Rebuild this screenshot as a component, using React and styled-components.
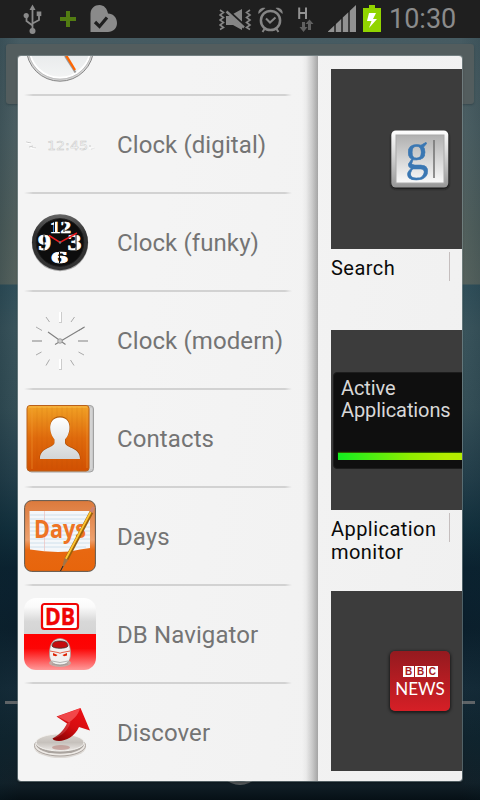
import React from "react";
import styled, { createGlobalStyle } from "styled-components";

const GlobalStyle = createGlobalStyle`
  * { box-sizing: border-box; }
  body { margin: 0; background: #0a1a24; font-family: Roboto, "Liberation Sans", sans-serif; }
  svg { display: block; flex: none; }
`;

const Screen = styled.div`
  width: 480px;
  height: 800px;
  overflow: hidden;
  display: flex;
  flex-direction: column;
`;

const StatusBar = styled.header`
  height: 38px;
  flex: none;
  display: flex;
  justify-content: space-between;
  background: #1f1f1f;
`;

const Time = styled.time`
  width: 91px;
  color: #8b8b8b;
  font-size: 27px;
  line-height: 38px;
  letter-spacing: 0;
`;

const StatusGroup = styled.div`
  display: flex;
`;

const Wallpaper = styled.main`
  position: relative;
  flex: 1;
  padding: 18px 18px 19px;
  background:
    linear-gradient(90deg, rgba(10, 35, 45, 0.22), transparent 4%, transparent 96%, rgba(10, 35, 45, 0.15)),
    linear-gradient(#465b62, #4d6064 90px, #53615e 190px, #58645f 246px, #31505b 247px,
      #3b555d 290px, #365058 370px, #243f4b 440px, #12303d 490px, #0b2230 530px,
      #0b1f2c 590px, #152b38 650px, #10242e 700px, #122028 745px, #061016 762px);
`;

const SearchBackdrop = styled.div`
  position: absolute;
  left: 6px;
  right: 6px;
  top: 6px;
  height: 60px;
  border-radius: 3px;
  background: #535d5e;
  box-shadow: 0 1px 2px rgba(20, 35, 40, 0.35);
`;

const PageLine = styled.div`
  position: absolute;
  left: 5px;
  right: 5px;
  top: 663px;
  height: 3px;
  background: #5f6467;
`;

const HomeRing = styled.div`
  position: absolute;
  left: 218px;
  top: 703px;
  width: 44px;
  height: 44px;
  border-radius: 50%;
  border: 3px solid #5a5f61;
`;

const Dialog = styled.section`
  position: relative;
  height: 725px;
  display: flex;
  overflow: hidden;
  border-radius: 3px;
  background: linear-gradient(100deg, #f4f4f4 30%, #f0f0f0);
  box-shadow: 0 0 0 1px rgba(150, 165, 168, 0.5), 0 2px 3px rgba(0, 0, 0, 0.35);
`;

const ListPane = styled.div`
  width: 300px;
  flex: none;
  padding-left: 6px;
  display: flex;
  background: linear-gradient(90deg, transparent 284px, rgba(0, 0, 0, 0.03) 288px,
    rgba(0, 0, 0, 0.16) 294px, rgba(0, 0, 0, 0.32) 300px);
`;

const List = styled.ul`
  width: 270px;
  margin: -58px 0 0;
  padding: 0;
  list-style: none;
`;

const Row = styled.li`
  height: 98px;
  padding-bottom: 2px;
  display: flex;
  align-items: center;
  gap: 21px;
  background: ${(p) =>
    p.$last
      ? "none"
      : "linear-gradient(90deg, transparent, #d2d2d2 9px, #d2d2d2 261px, transparent 268px) bottom / 100% 2px no-repeat"};
`;

const RowLabel = styled.span`
  padding-top: 2px;
  color: #747474;
  font-size: 24px;
  line-height: 30px;
  letter-spacing: 0.1px;
  white-space: nowrap;
`;

const PreviewPane = styled.div`
  flex: 1;
  min-width: 0;
  padding: 13px 0 0 13px;
  overflow: hidden;
`;

const Preview = styled.figure`
  height: 261px;
  margin: 0;
`;

const PreviewTile = styled.div`
  height: 180px;
  display: flex;
  align-items: center;
  padding-left: ${(p) => p.$inset}px;
  background: #3c3c3c;
`;

const Caption = styled.figcaption`
  display: flex;
  justify-content: space-between;
  padding-right: 12px;
  color: #0a0a0a;
  font-size: 20px;
  line-height: 23px;
  letter-spacing: 0.45px;
`;

const CaptionText = styled.span`
  width: 114px;
  padding-top: 8px;
`;

const CaptionRule = styled.i`
  width: 1px;
  height: 29px;
  margin-top: 3px;
  background: #c5bebe;
`;

const Monitor = styled.div`
  flex: none;
  width: 150px;
  height: 97px;
  padding: 4px 0 0 7px;
  border: 1px solid #1d1d1d;
  border-radius: 4px;
  background: #0f0f0f;
  color: #d8d8d8;
  font-size: 20px;
  line-height: 22px;
  letter-spacing: -0.1px;
`;

const MonitorBar = styled.div`
  height: 7px;
  margin: 32px 0 0 -3px;
  background: linear-gradient(90deg, #12ee20, #8fee00 50%, #b4ee00 75%);
  box-shadow: 0 -1px 1px #2c5a00;
`;

const BbcTile = styled.div`
  width: 60px;
  height: 60px;
  border-radius: 5px;
  background: linear-gradient(#941a1f, #d61f26);
  box-shadow: 0 1px 3px 1px rgba(0, 0, 0, 0.55);
`;

const LeftStatusIcons = () => (
  <svg width="125" height="38" viewBox="0 0 125 38">
    <g fill="none" stroke="#8a8a8a" strokeWidth="1.8">
      <path d="M32.5 8v23M32.5 25.5l-6-4.500v-5M32.500 23.500l6.500-3.500v-6" />
    </g>
    <g fill="#8a8a8a">
      <path d="M32.500 4.500l3 5.500h-6z" />
      <circle cx="26.200" cy="15.500" r="2.600" />
      <rect x="36.700" y="11.500" width="4.600" height="4.600" />
      <circle cx="32.500" cy="31" r="3" />
      <path d="M90.500 13.500C91 8 94.500 5 99.500 5c4.500 0 7.500 3.500 8.500 8.500 5 0 9 4 9 9.500s-4 9-9 9H90.500z" />
    </g>
    <path d="M68 11v16M60 19h16" stroke="#527c12" strokeWidth="4" />
    <path d="M95 22l4.500 4.500L107 17.500" fill="none" stroke="#1f1f1f" strokeWidth="3.200" />
  </svg>
);

const RightStatusIcons = () => (
  <svg width="170" height="38" viewBox="219 0 170 38">
    <g fill="none" stroke="#858585" strokeWidth="1.600">
      <path d="M220 10l3.500 2.500-3.500 2.500 3.500 2.500-3.500 2.500 3.500 2.500-3.500 2.500 3.500 2.500-3.500 2M250 10l-3.500 2.500 3.500 2.500-3.500 2.500 3.500 2.500-3.500 2.500 3.500 2.500-3.500 2.500 3.500 2" />
    </g>
    <path d="M226 16h5l11 10v4l-9-5h-7zM233 14l9-5v13z" fill="#858585" />
    <path d="M227 10l17 16" stroke="#1f1f1f" strokeWidth="3.500" />
    <path d="M226.500 11.500l17.500 16" stroke="#858585" strokeWidth="2.400" />
    <circle cx="270.500" cy="20.500" r="9.600" fill="none" stroke="#858585" strokeWidth="2.500" />
    <path d="M266 18.500l4 4 5.500-5M264.500 29l-2 3M276.500 29l2 3" fill="none" stroke="#858585" strokeWidth="2" />
    <path d="M258.500 14c-1-4 3-7 7-6zM282.500 14c1-4-3-7-7-6z" fill="#858585" />
    <path d="M299.200 7.500v11.500M306 7.500v11.500M299.200 13h6.800" stroke="#929292" strokeWidth="2" />
    <path d="M302 22h3v5h2.500l-4 5-4-5h2.500zM308 30v-6h-2.500l4-4.500 4 4.500H311v6z" fill="#606060" />
    <path d="M328 32V31.500L356 5v27z" fill="#919191" />
    <path d="M335 24v8M342 17.500V32M349 11v21" stroke="#101010" strokeWidth="1.300" />
    <path d="M363 8h6V5h6v3h6v24h-18z" fill="#91d400" />
    <path d="M369 13h7l-3 6h4l-8 9 2.500-7H367z" fill="#fff" />
  </svg>
);

const AnalogIcon = () => (
  <svg width="72" height="72" viewBox="0 0 72 72">
    <defs>
      <linearGradient id="face" x2="0" y2="1">
        <stop stopColor="#d8dcdf" /><stop offset="1" stopColor="#f3f4f4" />
      </linearGradient>
    </defs>
    <circle cx="36" cy="37.500" r="33.700" fill="#d6d6d6" stroke="#858585" strokeWidth="1" />
    <circle cx="36" cy="37" r="30.700" fill="url(#face)" stroke="#fff" strokeWidth="2" />
    <circle cx="36" cy="37.200" r="32" fill="none" stroke="#aaa" strokeWidth=".6" />
    <path d="M41 46l10.500 16.500" stroke="#999" strokeWidth="2" />
    <path d="M41 43.500L51 60" stroke="#ff6500" strokeWidth="2.300" />
  </svg>
);

const DigitalIcon = () => (
  <svg width="72" height="72" viewBox="0 0 72 72">
    <text x="23" y="41.500" textLength="41" lengthAdjust="spacingAndGlyphs" fontFamily="DejaVu Sans" fontSize="13" fill="#fbfbfb" stroke="#c6c6c6" strokeWidth=".45">12:45</text>
    <path d="M2 34l5 1M5 39l4-1M8 40h4M65 38h2M67 41l4-1" stroke="#ccc" fill="none" />
    <path d="M2 35l5 1M6 40l6 1M65 40h6" stroke="#fff" fill="none" />
  </svg>
);

const FunkyIcon = () => (
  <svg width="72" height="72" viewBox="0 0 72 72">
    <defs>
      <linearGradient id="rim" x2="0" y2="1">
        <stop stopColor="#666" /><stop offset=".35" stopColor="#303030" /><stop offset="1" stopColor="#333" />
      </linearGradient>
    </defs>
    <circle cx="36" cy="37" r="28.200" fill="#aaa" />
    <circle cx="36" cy="36.200" r="28" fill="url(#rim)" />
    <circle cx="36" cy="36.500" r="23.800" fill="#0d0d0d" stroke="#1b1b1b" />
    <g fill="#fff" stroke="#fff" strokeWidth=".7" fontFamily="Liberation Serif" fontWeight="bold">
      <text x="26" y="26.500" fontSize="17" textLength="21" lengthAdjust="spacingAndGlyphs">12</text>
      <text x="14" y="44" fontSize="24" textLength="13" lengthAdjust="spacingAndGlyphs">9</text>
      <text x="43.500" y="44" fontSize="24" textLength="14" lengthAdjust="spacingAndGlyphs">3</text>
      <text x="27" y="57" fontSize="17" textLength="17" lengthAdjust="spacingAndGlyphs">6</text>
    </g>
    <path d="M30.500 15v11M40 15v11M20 29v15M52 29v15M35.500 46v11" stroke="#0d0d0d" strokeWidth="1" />
    <path d="M25 29.500l11 7 17-9.500" fill="none" stroke="#e8191c" strokeWidth="1.500" />
    <circle cx="36" cy="36.500" r="1.200" fill="#777" />
  </svg>
);

const ModernIcon = () => (
  <svg width="72" height="72" viewBox="0 0 72 72">
    <g stroke="#aaa" strokeWidth="1">
      <path d="M22 13l3.500 5M50.500 13L47 18M12 23l6 3.500M60.500 23L55 26.500M12 51l5.500-3M60 51l-5.500-3M22 61.500l3.500-6M50 61.500L46.500 56" />
    </g>
    <path d="M8 37h10M54 37h10" stroke="#bbb" strokeWidth="2" />
    <path d="M36.500 8v11M36.500 55v11" stroke="#ccc" strokeWidth="3" />
    <path d="M36 8v10M36 55v10" stroke="#fff" strokeWidth="2" />
    <path d="M24 28l17.500 12.500M31 40.500L60.500 23" stroke="#808080" strokeWidth="1.100" />
    <circle cx="36" cy="37" r="2.300" fill="#ccc" stroke="#888" strokeWidth=".7" />
  </svg>
);

const ContactsIcon = () => (
  <svg width="72" height="72" viewBox="0 0 72 72">
    <defs>
      <linearGradient id="book" x2="0" y2="1">
        <stop stopColor="#f1a225" /><stop offset=".5" stopColor="#df6a0c" /><stop offset="1" stopColor="#d15002" />
      </linearGradient>
      <linearGradient id="person" x2="0" y2="1">
        <stop stopColor="#fff" /><stop offset="1" stopColor="#d2d5d7" />
      </linearGradient>
    </defs>
    <rect x="4" y="3.500" width="65.500" height="66.500" rx="3.500" fill="#c9c9c9" stroke="#a1a1a1" />
    <path d="M67 6v61" stroke="#dedede" />
    <rect x="3" y="3.500" width="62" height="65.500" rx="3" fill="url(#book)" stroke="#ba6019" />
    <path d="M4.500 5h59" stroke="#f8bc4c" />
    <path d="M8 5v62M63 6v60" stroke="#f3a038" strokeWidth=".8" opacity=".6" />
    <path d="M13 5v62M18 5v62M23 5v62M28 5v62M33 5v62M38 5v62M43 5v62M48 5v62M53 5v62M58 5v62" stroke="#a84806" strokeWidth=".7" opacity=".16" />
    <path d="M36 14.300c7.200 0 10.700 5.500 9.900 13.200C45 33 43 35 41.500 37v3.500c1.500 5.500 15.300 4.500 15 16H15.500c0-11.500 13.500-10.500 15-16V37C29 35 26.800 33 26.100 27.500 25.300 19.800 28.800 14.300 36 14.300z" fill="#8a3b00" opacity=".6" />
    <path d="M36 15.500c7.200 0 10.200 5.500 9.400 12C44.500 33 43 35 41 37.500V41c1.500 5.500 15.300 4.500 15 16H16c-.3-11.500 13-10.500 14.500-16v-3.500C29 35 27 33 26.300 27.500 25.500 21 28.800 15.500 36 15.500z" fill="url(#person)" />
  </svg>
);

const DaysIcon = () => (
  <svg width="72" height="72" viewBox="0 0 72 72">
    <defs>
      <linearGradient id="days" x2="0" y2="1">
        <stop stopColor="#dc7a3c" /><stop offset=".55" stopColor="#eda06d" /><stop offset=".7" stopColor="#e86811" /><stop offset="1" stopColor="#e7650c" />
      </linearGradient>
    </defs>
    <rect x=".6" y=".6" width="70.800" height="70.800" rx="7" fill="url(#days)" stroke="#60584e" />
    <path d="M5.500 11H66V48q-10 1-20 3.500-20 1.500-40-2z" fill="#f4f7fa" />
    <path d="M6 15h60M6 19h60M6 23h60M6 27h60M6 31h60M6 35h60M6 39h60M6 43h60M6 47h56" stroke="#c7dae9" strokeWidth=".8" />
    <path d="M20.500 11v40" stroke="#edc0bd" strokeWidth=".7" />
    <text x="10" y="37.500" fontFamily="Open Sans" fontWeight="700" fontSize="24.500" fill="#ee7425" textLength="52" lengthAdjust="spacingAndGlyphs">Days</text>
    <path d="M67.500 12L42.500 59" stroke="#9b610c" strokeWidth="4" />
    <path d="M66.700 12L41.700 59" stroke="#ffc631" strokeWidth="1.800" />
    <path d="M70.800 7.500L68.500 13l-3-2 3-4.500z" fill="#cb8273" />
    <path d="M40.500 58l3.500 2L37 71z" fill="#a07448" />
    <path d="M39 66l-2.500 5" stroke="#222" />
  </svg>
);

const DbIcon = () => (
  <svg width="72" height="72" viewBox="0 0 72 72">
    <defs>
      <clipPath id="dbClip"><rect width="72" height="72" rx="12" /></clipPath>
      <linearGradient id="silver" x2="0" y2="1"><stop stopColor="#fff" /><stop offset=".25" stopColor="#fafafa" /><stop offset=".65" stopColor="#d8d8d8" /><stop offset="1" stopColor="#d4d4d4" /></linearGradient>
      <linearGradient id="red" x2="0" y2="1"><stop stopColor="#f00" /><stop offset=".4" stopColor="#fc0505" /><stop offset="1" stopColor="#ff9a9a" /></linearGradient>
    </defs>
    <g clipPath="url(#dbClip)">
      <path d="M0 0h72v36H0z" fill="url(#silver)" />
      <path d="M0 36h72v36H0z" fill="url(#red)" />
    </g>
    <rect x="18" y="6" width="36" height="25" rx="2.500" fill="#fff" stroke="#f00505" strokeWidth="2.200" />
    <text x="21" y="27" fontFamily="Open Sans" fontWeight="700" fontSize="24" fill="#f00505" stroke="#f00505" strokeWidth=".5" textLength="30" lengthAdjust="spacingAndGlyphs">DB</text>
    <ellipse cx="36" cy="65" rx="11" ry="4" fill="#c3aaa4" />
    <path d="M25.500 56c0-7 1.500-15 10.500-15.500 9 .5 10.500 8.500 10.500 15.500 0 6.500-3 11-10.500 11s-10.500-4.500-10.500-11z" fill="#f2f1ef" stroke="#a29b94" strokeWidth=".7" />
    <path d="M28 48c.5-4 3-5 8-5s7.500 1 8 5c-1 3-15 3-16 0z" fill="#c40d0d" stroke="#3f3634" strokeWidth=".8" />
    <path d="M26 53l8 1.500q2 1.500 4 0l8-1.500" fill="none" stroke="#d20" strokeWidth=".7" />
    <path d="M29 55l4.500 2-1.500 1.200-3-.8zM43 55l-4.500 2 1.500 1.200 3-.8z" fill="#d20" />
    <path d="M28 63q8 3 16 0M28 66q8 2.500 16 0" fill="none" stroke="#999" strokeWidth=".7" />
  </svg>
);

const DiscoverIcon = () => (
  <svg width="72" height="72" viewBox="0 0 72 72">
    <defs>
      <linearGradient id="arrow" x1=".2" y1="1" x2=".8" y2="0"><stop stopColor="#8c0204" /><stop offset=".45" stopColor="#d50d11" /><stop offset="1" stopColor="#ed1015" /></linearGradient>
      <linearGradient id="disc" x2="0" y2="1"><stop stopColor="#dad6d1" /><stop offset=".5" stopColor="#c6c1bc" /><stop offset="1" stopColor="#ece9e6" /></linearGradient>
    </defs>
    <ellipse cx="36" cy="51" rx="26" ry="11" fill="#ddd9d5" />
    <ellipse cx="36" cy="49.500" rx="25.500" ry="10.500" fill="#eeeae6" stroke="#aaa39e" />
    <ellipse cx="36" cy="48" rx="24" ry="9.800" fill="#aaa49f" />
    <ellipse cx="36" cy="46.500" rx="24" ry="8.500" fill="url(#disc)" stroke="#f4f2ef" />
    <ellipse cx="37" cy="51.500" rx="9" ry="2.500" fill="#b98a84" opacity=".65" />
    <path d="M28.500 42.500C37 38 41 32 43 27.500L32.500 20.500 56.500 12 66 34.500 55 31C51 40 42 45 35 45c-4 0-6-1-6.500-2.500z" fill="url(#arrow)" />
    <path d="M33.500 20.500L56 12.500c-2 7-7 11-11 14z" fill="#ff7777" opacity=".55" />
    <path d="M29 42.500C37 38 41 32 43.500 27l3-1c-2 8-8 14-17.500 16.500z" fill="#fff" opacity=".15" />
  </svg>
);

const SearchIcon = () => (
  <svg width="64" height="64" viewBox="0 0 64 64">
    <defs>
      <linearGradient id="frame" x2="0" y2="1"><stop stopColor="#fff" /><stop offset=".35" stopColor="#ddd" /><stop offset="1" stopColor="#969696" /></linearGradient>
      <linearGradient id="inner" x2="0" y2="1"><stop stopColor="#b0b0b0" /><stop offset="1" stopColor="#fafafa" /></linearGradient>
      <filter id="shade"><feGaussianBlur stdDeviation="1.300" /></filter>
    </defs>
    <rect x="3" y="5" width="58" height="57" rx="5" fill="#161616" filter="url(#shade)" />
    <rect x="3.300" y="3.500" width="57" height="57" rx="4.500" fill="url(#frame)" />
    <rect x="8" y="8" width="48" height="48" fill="url(#inner)" stroke="#aaa" />
    <text transform="translate(17.500 42.300) scale(.98 1.120)" fontFamily="Liberation Serif" fontSize="47" fill="#3a77b3" stroke="#3a77b3" strokeWidth=".5">g</text>
    <path d="M46 13v38" stroke="#777" strokeWidth="1.600" />
  </svg>
);

const BbcLogo = () => (
  <svg width="60" height="60" viewBox="0 0 60 60">
    <path d="M13 15h11v11H13zM25 15h11v11H25zM37 15h11v11H37z" fill="#fff" />
    <g fontFamily="Liberation Sans" fontWeight="bold" fontSize="10" fill="#a91b21">
      <text x="14.900" y="24.200">B</text><text x="26.900" y="24.200">B</text><text x="38.700" y="24.200">C</text>
    </g>
    <text x="5.200" y="44" fontFamily="Lato" fontSize="18" fill="#fff" textLength="49.500" lengthAdjust="spacingAndGlyphs">NEWS</text>
  </svg>
);

const widgets = [
  { icon: AnalogIcon, label: "" },
  { icon: DigitalIcon, label: "Clock (digital)" },
  { icon: FunkyIcon, label: "Clock (funky)" },
  { icon: ModernIcon, label: "Clock (modern)" },
  { icon: ContactsIcon, label: "Contacts" },
  { icon: DaysIcon, label: "Days" },
  { icon: DbIcon, label: "DB Navigator" },
  { icon: DiscoverIcon, label: "Discover" },
];

export default function App() {
  return (
    <Screen>
      <GlobalStyle />
      <StatusBar>
        <LeftStatusIcons />
        <StatusGroup>
          <RightStatusIcons />
          <Time>10:30</Time>
        </StatusGroup>
      </StatusBar>
      <Wallpaper>
        <SearchBackdrop />
        <PageLine />
        <HomeRing />
        <Dialog>
          <ListPane>
            <List>
              {widgets.map(({ icon: Icon, label }, i) => (
                <Row key={i} $last={i === widgets.length - 1}>
                  <Icon />
                  <RowLabel>{label}</RowLabel>
                </Row>
              ))}
            </List>
          </ListPane>
          <PreviewPane>
            <Preview>
              <PreviewTile $inset={57}><SearchIcon /></PreviewTile>
              <Caption><CaptionText>Search</CaptionText><CaptionRule /></Caption>
            </Preview>
            <Preview>
              <PreviewTile $inset={2}>
                <Monitor>
                  Active<br />Applications
                  <MonitorBar />
                </Monitor>
              </PreviewTile>
              <Caption><CaptionText>Application monitor</CaptionText><CaptionRule /></Caption>
            </Preview>
            <Preview>
              <PreviewTile $inset={59}><BbcTile><BbcLogo /></BbcTile></PreviewTile>
            </Preview>
          </PreviewPane>
        </Dialog>
      </Wallpaper>
    </Screen>
  );
}
